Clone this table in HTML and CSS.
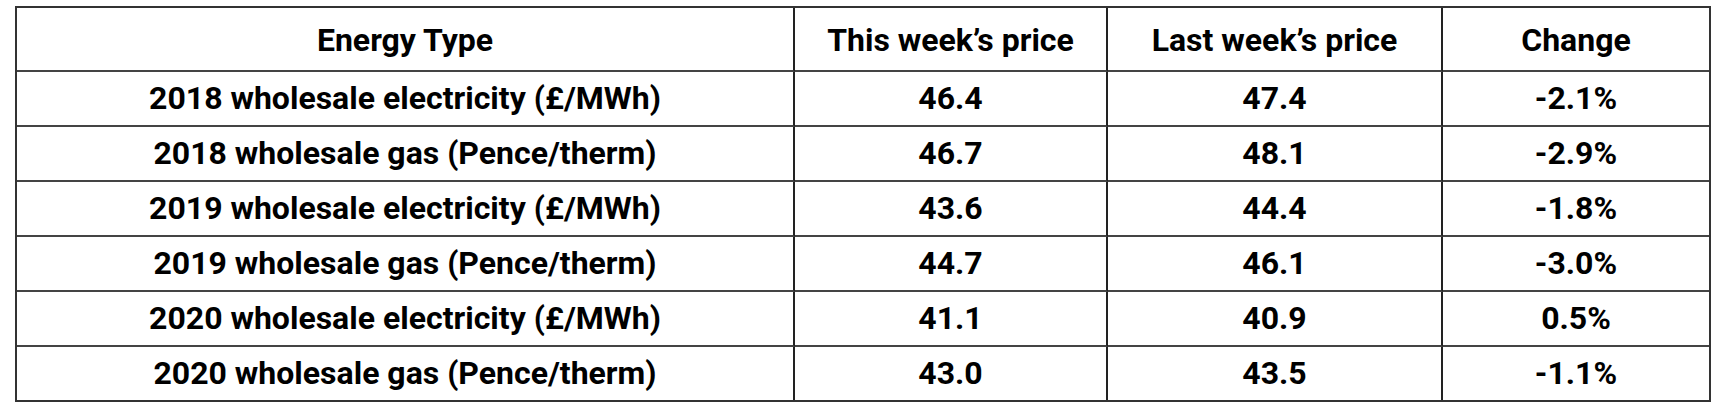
FILE: index.html
```html
<!DOCTYPE html>
<html lang="en">
<head>
<meta charset="utf-8">
<title>Energy prices</title>
<link rel="stylesheet" href="styles.css">
</head>
<body>
<div class="page">
  <table class="prices">
    <colgroup>
      <col class="c-type">
      <col class="c-this">
      <col class="c-last">
      <col class="c-change">
    </colgroup>
    <thead>
      <tr>
        <th>Energy Type</th>
        <th>This week’s price</th>
        <th>Last week’s price</th>
        <th>Change</th>
      </tr>
    </thead>
    <tbody>
      <tr><td>2018 wholesale electricity (£/MWh)</td><td>46.4</td><td>47.4</td><td>-2.1%</td></tr>
      <tr><td>2018 wholesale gas (Pence/therm)</td><td>46.7</td><td>48.1</td><td>-2.9%</td></tr>
      <tr><td>2019 wholesale electricity (£/MWh)</td><td>43.6</td><td>44.4</td><td>-1.8%</td></tr>
      <tr><td>2019 wholesale gas (Pence/therm)</td><td>44.7</td><td>46.1</td><td>-3.0%</td></tr>
      <tr><td>2020 wholesale electricity (£/MWh)</td><td>41.1</td><td>40.9</td><td>0.5%</td></tr>
      <tr><td>2020 wholesale gas (Pence/therm)</td><td>43.0</td><td>43.5</td><td>-1.1%</td></tr>
    </tbody>
  </table>
</div>
</body>
</html>
```

FILE: styles.css
```css
html, body {
  margin: 0;
  padding: 0;
  background: #ffffff;
}

.page {
  padding: 6px 0 0 15px;
}

.prices {
  border-collapse: separate;
  border-spacing: 0;
  table-layout: fixed;
  width: 1696px;
  border: 2px solid #333333;
  font-family: Roboto, "Liberation Sans", sans-serif;
  font-weight: 700;
  font-size: 32px;
  color: #000000;
}

.c-type { width: 778px; }
.c-this { width: 313px; }
.c-last { width: 335px; }
.c-change { width: 266px; }

.prices th,
.prices td {
  padding: 0;
  text-align: center;
  vertical-align: middle;
  font-weight: 700;
  border-right: 2px solid #222222;
  border-bottom: 2px solid #444444;
  white-space: nowrap;
}

.prices th:last-child,
.prices td:last-child {
  border-right: none;
}

.prices tbody tr:last-child td {
  border-bottom: none;
}

.prices thead th {
  padding-top: 3px;
  line-height: 59px;
}

.prices tbody td {
  line-height: 53px;
}
```
